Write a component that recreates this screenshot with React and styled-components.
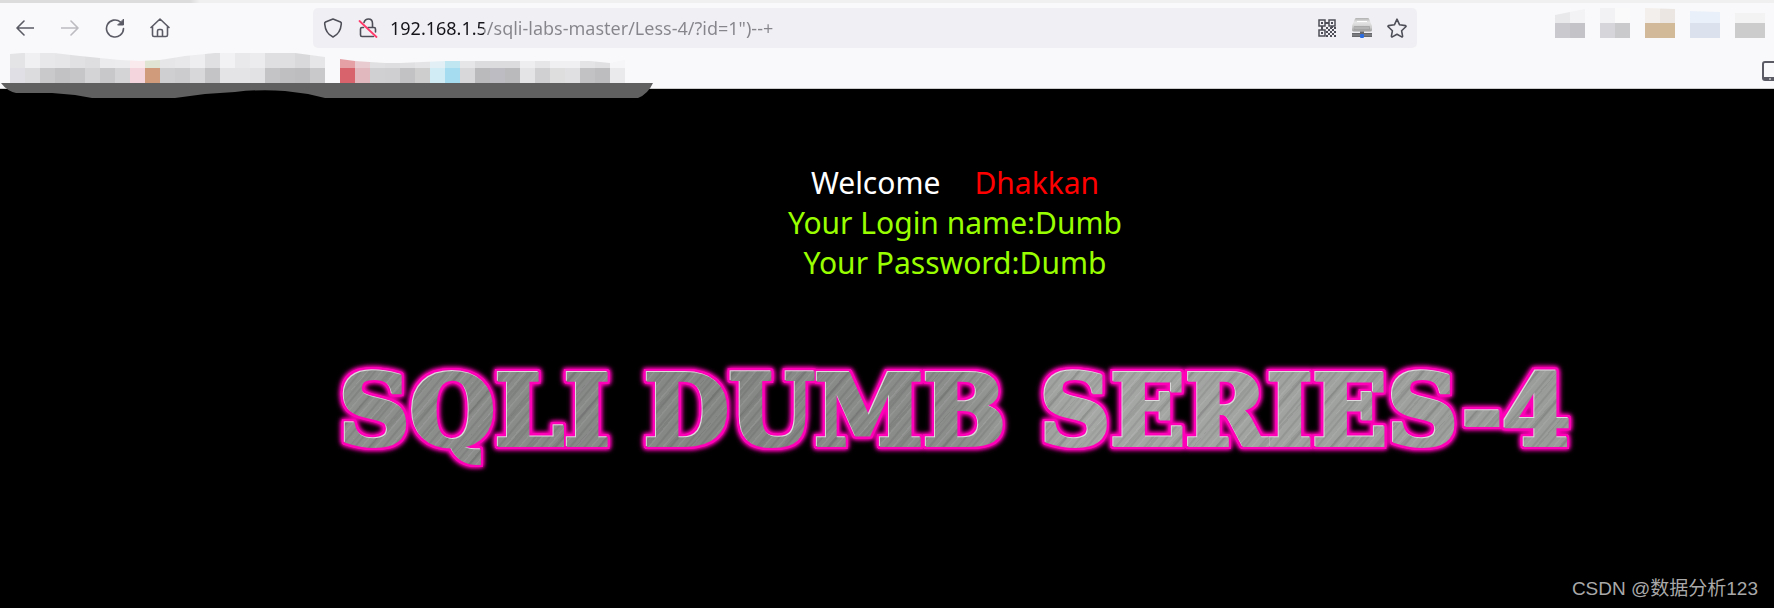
import React, { useState } from 'react'
import styled, { createGlobalStyle } from 'styled-components';

const bookmarksLeft = {
  x: 10,
  top: ['#e4e4e6', '#f0f0f2', '#e8e8ea', '#e6e6e8', '#e1e1e3', '#dedee0', '#ebebed', '#ececee', '#fae9ed', '#e0e4d2', '#e6e6e8', '#e8e8ea', '#eeeef0', '#e0e0e2', '#f2f2f4', '#e9e9eb', '#ececee', '#dfdfe1', '#dfdfe1', '#d9d9db', '#e6e6e8'],
  bottom: ['#dfdfe5', '#dcdcde', '#c9c9cb', '#c2c2c4', '#c6c6c8', '#d4d4d6', '#c8c8ca', '#d4d4d6', '#f5d5dd', '#d09b7a', '#cfcfd1', '#ccccce', '#d8d8da', '#c4c4c6', '#e4e4e6', '#e4e4e6', '#e2e2e4', '#c4c4c6', '#bfbfc1', '#bdbdbf', '#c9c9cb'],
}
const bookmarksRight = {
  x: 340,
  top: ['#e5a0a6', '#e8cbd0', '#e0e0e2', '#dedee0', '#e0e0e2', '#e4e4e6', '#e2f0f5', '#c0e6f2', '#e6e6e8', '#dcdcde', '#dcdcde', '#dcdcde', '#eeeef0', '#e6e6e8', '#f0f0f2', '#f0f0f2', '#e4e4e6', '#e0e0e2', '#f6f6f8'],
  bottom: ['#d9636c', '#e2b8bf', '#d0d0d2', '#cfcfd1', '#c2c2c4', '#cececf', '#d2ecf5', '#a5dcf0', '#d8d8da', '#bababc', '#bcbcc2', '#bababc', '#e4e4e6', '#d0d0d2', '#dededf', '#e0e0e2', '#c2c2c4', '#bdbdbf', '#eaeaec'],
}
const extensions = [
  { top: ['#e9e9eb', '#f3f3f5'], bottom: ['#cacace', '#c3c3c8'], cut: '0,7 30,1 30,30 0,30' },
  { top: ['#f2f2f4', '#fafafb'], bottom: ['#d6d6da', '#cacacd'], cut: '0,0 30,0 30,30 0,30' },
  { top: ['#f3efec', '#ece6e2'], bottom: ['#d2b99a', '#d2b998'], cut: '0,0 30,1 30,30 0,30' },
  { top: ['#eaf0fa', '#eaf0fa'], bottom: ['#dce1ee', '#dce1ee'], cut: '0,3 30,4 30,30 0,30' },
  { top: ['#f3f3f4', '#f3f3f4'], bottom: ['#cccccc', '#cccccc'], cut: '0,5 30,5 30,30 0,30' },
]

function Cells({ x, top, bottom, y, split, end }) {
  return (
    <g shapeRendering="crispEdges">
      {top.map((c, i) => <rect key={'t' + i} x={x + i * 15} y={y} width="15" height={split - y} fill={c} stroke="none" />)}
      {bottom.map((c, i) => <rect key={'b' + i} x={x + i * 15} y={split} width="15" height={end - split} fill={c} stroke="none" />)}
    </g>
  )
}

function BookmarkStrip() {
  return (
    <Strip width="660" height="45" viewBox="0 53 660 45" aria-hidden="true">
      <clipPath id="leftEdge">
        <path d="M10 83V54L22 53H54L80 56L100 58L120 60L140 61L160 60L185 56L215 53H295L325 57V83Z" />
      </clipPath>
      <clipPath id="rightEdge">
        <path d="M340 83V59L355 61L370 62L385 63L400 63L445 61H590L610 63L625 60V83Z" />
      </clipPath>
      <g clipPath="url(#leftEdge)"><Cells {...bookmarksLeft} y={53} split={68} end={83} /></g>
      <g clipPath="url(#rightEdge)"><Cells {...bookmarksRight} y={53} split={68} end={83} /></g>
      <path fill="#606060" d="M1 83H653Q648 94 638 98H325L308 94L285 91Q260 89 235 92L205 94L175 98H92L75 95L52 93H16Q7 91 1 83Z" />
    </Strip>
  )
}

function QrIcon() {
  const dots = []
  for (let row = 0; row < 5; row++) {
    for (let col = 0; col < 5; col++) {
      if ((row + col) % 2 === 0) dots.push([8 + col * 2, 8 + row * 2])
    }
  }
  return (
    <svg width="18" height="18" viewBox="0 0 18 18">
      <g strokeLinecap="butt" strokeLinejoin="miter">
        <path d="M1 1H7V7H1ZM11 1H17V7H11ZM1 11H7V17H1Z" strokeWidth="1.5" />
        <path d="M3 4H5M13 4H15M3 14H5M7 4H11M4 7V11M14 7V9" strokeWidth="2" />
      </g>
      {dots.map(([x, y]) => <rect key={x + '-' + y} x={x} y={y} width="2" height="2" fill="currentColor" stroke="none" />)}
    </svg>
  )
}

function DiskIcon() {
  return (
    <svg width="20" height="20" viewBox="0 0 20 20">
      <defs>
        <linearGradient id="disk" x1="0" y1="0" x2="0" y2="1">
          <stop offset="0" stopColor="#b0b0b0" />
          <stop offset="0.3" stopColor="#e6e6e6" />
          <stop offset="0.7" stopColor="#cccccc" />
          <stop offset="1" stopColor="#9a9a9a" />
        </linearGradient>
      </defs>
      <g stroke="none">
        <path d="M4 0H16Q17 0 17.500 2L20 8V12Q20 13.500 18 13.500H2Q0 13.500 0 12V8L2.500 2Q3 0 4 0Z" fill="url(#disk)" />
        <path d="M2.500 8.500H17.500V11.500H2.500Z" fill="#b4b4b4" stroke="#989898" strokeWidth="0.6" />
        <path d="M5 3H15V4H5Z" fill="#fff" />
        <path d="M0 15H8V13.500H12V15H20V19H0Z" fill="#66676b" />
        <path d="M0 16.500H20V17.500H0Z" fill="#8f9094" />
        <rect x="8" y="16" width="4" height="4" rx="1" fill="#2b6ce0" />
      </g>
    </svg>
  )
}

export default function App() {
  const [url, setUrl] = useState('192.168.1.5/sqli-labs-master/Less-4/?id=1")--+')
  return (
    <>
      <GlobalStyle />
      <Browser>
        <TabEdge />
        <Toolbar>
          <NavButtons>
            <IconButton aria-label="Back">
              <svg width="18" height="18" viewBox="0 0 18 18"><path d="M17.500 9H1.500M8 2L1 9L8 16" /></svg>
            </IconButton>
            <IconButton aria-label="Forward" disabled>
              <svg width="18" height="18" viewBox="0 0 18 18"><path d="M.5 9H16.500M10 2L17 9L10 16" /></svg>
            </IconButton>
            <IconButton aria-label="Reload">
              <svg width="20" height="20" viewBox="0 0 20 20">
                <path d="M18.500 10.500A8.500 8.500 0 1 1 15.500 4" />
                <path d="M18.500 1.500V7H13Z" fill="currentColor" strokeWidth="1" />
              </svg>
            </IconButton>
            <IconButton aria-label="Home">
              <svg width="20" height="20" viewBox="0 0 20 20">
                <path d="M1 9.500L10 1L19 9.500M2.500 8.500V17Q2.500 18.500 4 18.500H16Q17.500 18.500 17.500 17V8.500M7.500 18.500V13Q7.500 11.500 9 11.500H11Q12.500 11.500 12.500 13V18.500" />
              </svg>
            </IconButton>
          </NavButtons>
          <AddressBar>
            <BarButton aria-label="Tracking protection">
              <svg width="20" height="20" viewBox="0 0 20 20">
                <path d="M10 1L17.500 4Q18.500 4.500 18.300 6Q17.500 15.500 10 19Q2.500 15.500 1.700 6Q1.500 4.500 2.500 4Z" />
              </svg>
            </BarButton>
            <BarButton aria-label="Connection not secure">
              <svg width="20" height="20" viewBox="0 0 20 20">
                <path d="M6 4.500Q7 1 10.500 1Q14.500 1 14.500 5.500V9.500H16Q17.500 9.500 17.500 11V14M5.500 9.500H4Q2.500 9.500 2.500 11V17Q2.500 18.500 4 18.500H15.500M10 9.500H14.500" />
                <path d="M1.500 3L18.500 19" stroke="#ff3b6b" strokeWidth="1.8" />
              </svg>
            </BarButton>
            <UrlInput aria-label="Address" spellCheck="false" value={url} onChange={(e) => setUrl(e.target.value)} />
            <BarButton aria-label="QR code"><QrIcon /></BarButton>
            <BarButton aria-label="Proxy"><DiskIcon /></BarButton>
            <BarButton aria-label="Bookmark this page">
              <svg width="20" height="20" viewBox="0 0 20 20">
                <path d="M10 1.200L12.600 6.800L18.600 7.600Q19.400 8 18.800 8.700L14.600 12.800L15.600 18.200Q15.500 19.200 14.700 18.900L10 16.200L5.300 18.900Q4.500 19.200 4.400 18.200L5.400 12.800L1.200 8.700Q.6 8 1.400 7.600L7.400 6.800Z" />
              </svg>
            </BarButton>
          </AddressBar>
          <Extensions>
            {extensions.map((e, i) => (
              <svg key={i} width="30" height="30" viewBox="0 0 30 30">
                <clipPath id={'ext' + i}><polygon points={e.cut} /></clipPath>
                <g clipPath={`url(#ext${i})`}><Cells x={0} top={e.top} bottom={e.bottom} y={0} split={15} end={30} /></g>
              </svg>
            ))}
          </Extensions>
        </Toolbar>
        <Bookmarks>
          <BookmarkStrip />
          <MobileButton aria-label="Mobile bookmarks">
            <svg width="12" height="20" viewBox="0 0 12 20">
              <path d="M12 1H3Q1 1 1 3V17Q1 19 3 19H12" fill="none" stroke="#5b5b66" strokeWidth="2" />
              <path d="M2 17.500H12" stroke="#5b5b66" strokeWidth="3" />
              <path d="M7 18H9" stroke="#f9f9fb" />
            </svg>
          </MobileButton>
        </Bookmarks>
      </Browser>
      <Page>
        <Message>
          <Line color="#fff">Welcome<Name>Dhakkan</Name></Line>
          <Line color="#99ff00">Your Login name:Dumb</Line>
          <Line color="#99ff00">Your Password:Dumb</Line>
        </Message>
        <Banner><span>SQLI DUMB SERIES-4</span></Banner>
        <Watermark>CSDN @数据分析123</Watermark>
      </Page>
    </>
  )
}

const GlobalStyle = createGlobalStyle`
  html, body, #root {
    height: 100%;
  }
  body {
    margin: 0;
    background: #000;
    overflow: hidden;
  }
  #root {
    display: flex;
    flex-direction: column;
  }
  * {
    box-sizing: border-box;
  }
`;
const Browser = styled.header`
  background: #f9f9fb;
  border-bottom: 1px solid #cccccc;
`;
const TabEdge = styled.div`
  height: 3px;
  background: linear-gradient(90deg, #dcdcdd 190px, #f0f0f0 200px);
`;
const Toolbar = styled.div`
  display: flex;
  align-items: center;
  height: 50px;
  padding: 0 9px 0 2px;
`;
const NavButtons = styled.nav`
  display: flex;
  width: 311px;
  flex-shrink: 0;
`;
const IconButton = styled.button`
  display: flex;
  align-items: center;
  justify-content: center;
  width: 45px;
  height: 40px;
  padding: 0;
  border: none;
  background: none;
  color: #5b5b66;
  svg {
    fill: none;
    stroke: currentColor;
    stroke-width: 1.6;
    stroke-linecap: round;
    stroke-linejoin: round;
  }
  &:disabled {
    color: #bcbcc1;
  }
`;
const AddressBar = styled.div`
  display: flex;
  align-items: center;
  flex: 1;
  min-width: 0;
  height: 40px;
  padding: 0 3px 0 2px;
  border-radius: 5px;
  background: #f0f0f4;
`;
const BarButton = styled(IconButton)`
  width: 35px;
  flex-shrink: 0;
  color: #4e4e58;
`;
const UrlInput = styled.input`
  flex: 1;
  min-width: 0;
  height: 40px;
  padding: 0 5px;
  border: none;
  outline: none;
  /* host part dark, path part grey */
  background: linear-gradient(90deg, #15141a 99px, #86858c 99px);
  background-clip: text;
  -webkit-text-fill-color: transparent;
  font-family: 'Noto Sans', sans-serif;
  font-size: 18px;
`;
const Extensions = styled.div`
  display: flex;
  justify-content: flex-end;
  gap: 15px;
  width: 348px;
  padding-bottom: 10px;
  flex-shrink: 0;
`;
const Bookmarks = styled.div`
  display: flex;
  justify-content: space-between;
  height: 35px;
`;
/* taller than its row, so it hangs over the page */
const Strip = styled.svg`
  position: relative;
  z-index: 1;
  flex-shrink: 0;
`;
const MobileButton = styled.button`
  display: flex;
  align-items: center;
  height: 36px;
  padding: 0;
  border: none;
  background: none;
`;
const Page = styled.main`
  position: relative;
  flex: 1;
  display: flex;
  flex-direction: column;
  align-items: center;
  padding: 74px 0 0 136px;
  background: #000;
`;
const Message = styled.div`
  text-align: center;
  font-family: 'Noto Sans', sans-serif;
  font-size: 30px;
  line-height: 40px;
`;
const Line = styled.div`
  color: ${(p) => p.color};
`;
const Name = styled.span`
  margin-left: 34px;
  color: #ff0000;
`;
const Banner = styled.h1`
  margin: 68px 0 0;
  font-family: 'DejaVu Serif', serif;
  font-size: 98px;
  font-weight: 700;
  line-height: 120px;
  white-space: nowrap;
  filter: drop-shadow(-1px -1px 0 #dcdcdc) drop-shadow(2px 0 0 #ff00b8) drop-shadow(-2px 0 0 #ff00b8) drop-shadow(0 2px 0 #ff00b8) drop-shadow(0 -2px 0 #ff00b8) drop-shadow(0 0 2px #ff00b8) drop-shadow(0 0 2px #ff00b8);
  span {
    color: transparent;
    -webkit-text-stroke: 4px transparent;
    background:
      repeating-linear-gradient(130deg, rgba(255, 255, 255, 0.08) 0 1px, transparent 2px 5px, rgba(0, 0, 0, 0.08) 6px 7px, transparent 8px 11px),
      repeating-linear-gradient(132deg, rgba(0, 0, 0, 0.06) 0 2px, transparent 4px 17px),
      linear-gradient(90deg, #8e908e, #858785 30%, #8c8e8c 50%, #a6a8a6 60%, #9a9c9a);
    background-clip: text;
  }
`;
const Watermark = styled.div`
  position: absolute;
  right: 16px;
  bottom: 5px;
  color: #a9a9a9;
  font-family: 'Liberation Sans', 'Noto Sans CJK SC', sans-serif;
  font-size: 19px;
  line-height: 28px;
`;
